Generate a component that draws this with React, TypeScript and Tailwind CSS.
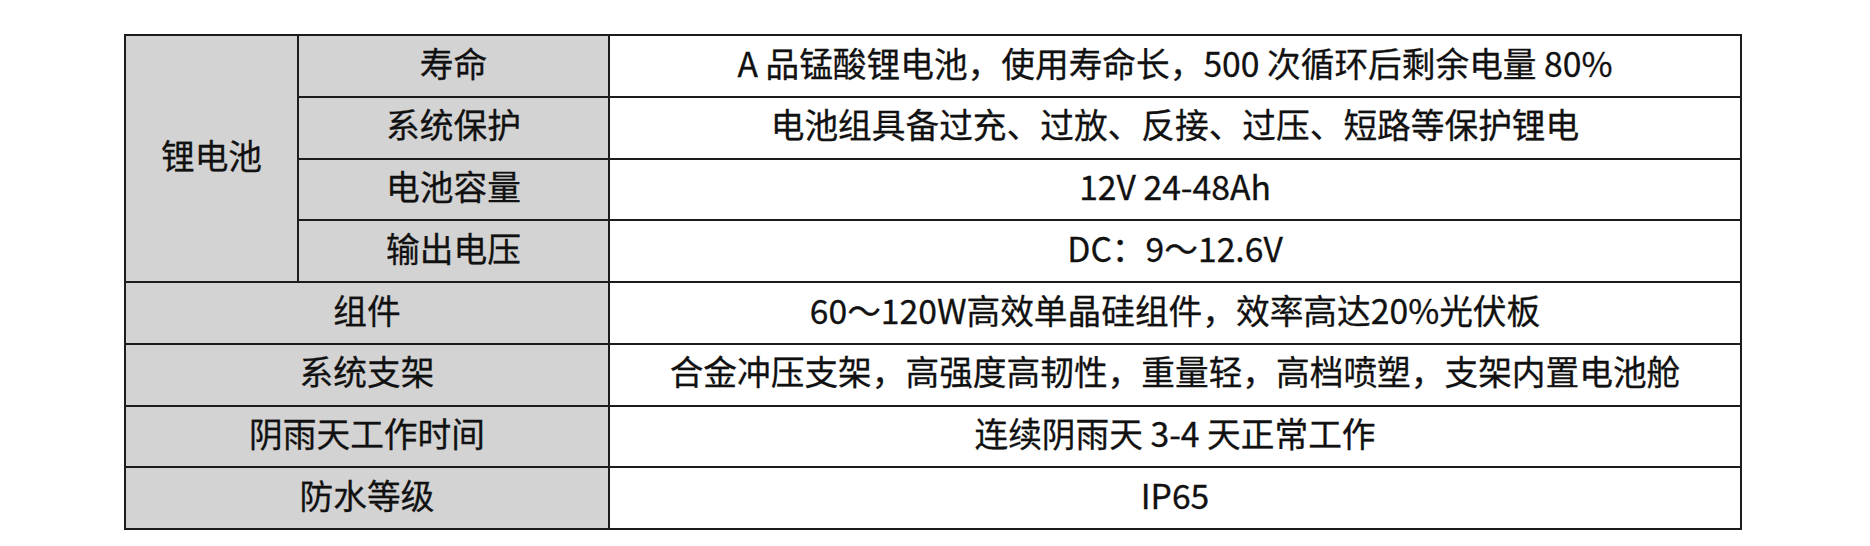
const SUB_ROWS: [string, string][] = [
  ['寿命', 'A 品锰酸锂电池，使用寿命长，500 次循环后剩余电量 80%'],
  ['系统保护', '电池组具备过充、过放、反接、过压、短路等保护锂电'],
  ['电池容量', '12V 24-48Ah'],
  ['输出电压', 'DC：9～12.6V'],
];

const ROWS: [string, string][] = [
  ['组件', '60～120W高效单晶硅组件，效率高达20%光伏板'],
  ['系统支架', '合金冲压支架，高强度高韧性，重量轻，高档喷塑，支架内置电池舱'],
  ['阴雨天工作时间', '连续阴雨天 3-4 天正常工作'],
  ['防水等级', 'IP65'],
];

const head = 'flex items-center justify-center pb-[7px] bg-[#d3d3d3]';
const body = 'flex items-center justify-center pb-[7px] bg-white';

export default function App() {
  return (
    <div
      className="w-[1870px] h-[546px] bg-white pt-[34px] pl-[124px] text-[#111] text-[33.7px] leading-none [-webkit-text-stroke:0.3px_#111]"
      style={{ fontFamily: '"Noto Sans CJK SC", "Noto Sans", sans-serif' }}
    >
      <div className="grid grid-cols-[171px_309px_1fr] grid-rows-[repeat(8,1fr)] gap-[2px] p-[2px] w-[1618px] h-[496px] bg-[#1c1c1c]">
        {/* 锂电池 merged cell */}
        <div className={`${head} row-span-4`}>锂电池</div>
        {SUB_ROWS.map(([k, v], i) => (
          <div key={k} className="contents">
            <div className={head} style={{ gridColumn: 2, gridRow: i + 1 }}>{k}</div>
            <div className={body} style={{ gridColumn: 3, gridRow: i + 1 }}>{v}</div>
          </div>
        ))}
        {ROWS.map(([k, v]) => (
          <div key={k} className="contents">
            <div className={`${head} col-span-2`}>{k}</div>
            <div className={body}>{v}</div>
          </div>
        ))}
      </div>
    </div>
  );
}
